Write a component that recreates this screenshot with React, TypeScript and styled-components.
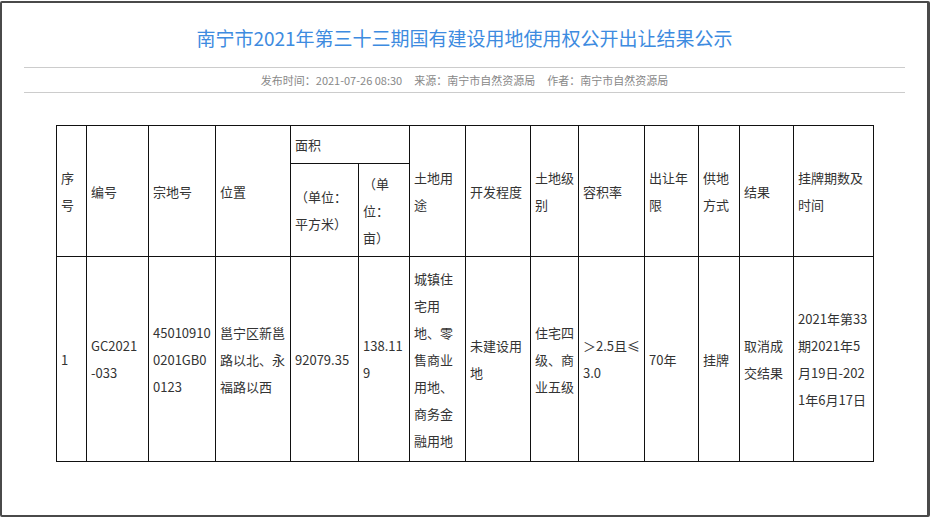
import React from "react";
import styled, { createGlobalStyle } from "styled-components";

const Global = createGlobalStyle`
  html, body { margin: 0; padding: 0; background: #fff; }
  body { font-family: "Noto Sans CJK SC", "Noto Sans", sans-serif; color: #333; }
`;

const Frame = styled.div`
  box-sizing: border-box;
  width: 930px;
  height: 516px;
  margin: 1px 0 0 0;
  border: 2px solid #4a4a4a;
  border-right-width: 3px;
  border-radius: 2px;
  padding: 0 22px;
`;

const Title = styled.h1`
  margin: 0;
  padding-top: 21px;
  height: 43px;
  font-size: 19px;
  font-weight: 400;
  color: #3d8be0;
  text-align: center;
  line-height: 27px;
`;

const Meta = styled.div`
  border-top: 1px solid #ccc;
  border-bottom: 1px solid #ccc;
  height: 24px;
  line-height: 24px;
  font-size: 11px;
  color: #888;
  text-align: center;
  span + span { margin-left: 12px; }
`;

const Table = styled.table`
  margin: 32px 0 0 32px;
  border-collapse: collapse;
  table-layout: fixed;
  width: 817px;
  font-size: 13px;
  color: #333;
`;

const Td = styled.td<{ $h?: number }>`
  border: 1px solid #111;
  padding: 0 3px 0 4px;
  vertical-align: middle;
  text-align: left;
  line-height: 27px;
  word-break: break-all;
  height: ${(p) => (p.$h ? `${p.$h}px` : "auto")};
`;

const widths = [30, 62, 67, 75, 68, 51, 56, 65, 48, 66, 54, 41, 54, 80];

export default function App() {
  return (
    <>
      <Global />
      <Frame>
        <Title>南宁市2021年第三十三期国有建设用地使用权公开出让结果公示</Title>
        <Meta>
          <span>发布时间：2021-07-26 08:30</span>
          <span>来源：南宁市自然资源局</span>
          <span>作者：南宁市自然资源局</span>
        </Meta>
        <Table>
          <colgroup>
            {widths.map((w, i) => (
              <col key={i} style={{ width: w }} />
            ))}
          </colgroup>
          <tbody>
            <tr>
              <Td rowSpan={2}>序号</Td>
              <Td rowSpan={2}>编号</Td>
              <Td rowSpan={2}>宗地号</Td>
              <Td rowSpan={2}>位置</Td>
              <Td colSpan={2} $h={37}>面积</Td>
              <Td rowSpan={2}>土地用途</Td>
              <Td rowSpan={2}>开发程度</Td>
              <Td rowSpan={2}>土地级别</Td>
              <Td rowSpan={2}>容积率</Td>
              <Td rowSpan={2}>出让年限</Td>
              <Td rowSpan={2}>供地方式</Td>
              <Td rowSpan={2}>结果</Td>
              <Td rowSpan={2}>挂牌期数及时间</Td>
            </tr>
            <tr>
              <Td $h={92}>（单位：平方米）</Td>
              <Td>（单位：亩）</Td>
            </tr>
            <tr>
              <Td $h={204}>1</Td>
              <Td>GC2021<br />-033</Td>
              <Td>450109100201GB00123</Td>
              <Td>邕宁区新邕<br />路以北、永<br />福路以西</Td>
              <Td>92079.35</Td>
              <Td>138.119</Td>
              <Td>城镇住宅用地、零售商业用地、商务金融用地</Td>
              <Td>未建设用地</Td>
              <Td>住宅四级、商业五级</Td>
              <Td>＞2.5且≤<br />3.0</Td>
              <Td>70年</Td>
              <Td>挂牌</Td>
              <Td>取消成交结果</Td>
              <Td>2021年第33期2021年5月19日-2021年6月17日</Td>
            </tr>
          </tbody>
        </Table>
      </Frame>
    </>
  );
}
